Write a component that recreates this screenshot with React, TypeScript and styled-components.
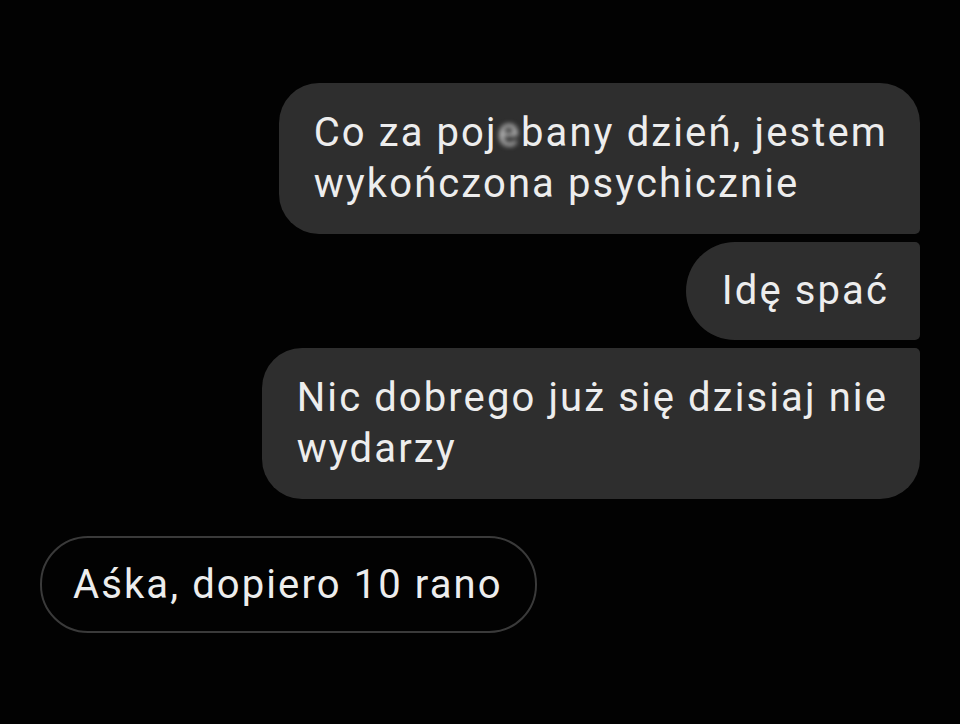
import { ReactElement } from "react";
import styled, { createGlobalStyle, css } from "styled-components";

const GlobalStyle = createGlobalStyle`
  html, body {
    margin: 0;
    padding: 0;
    background: #000;
  }
  body {
    font-family: Roboto, "Noto Sans", sans-serif;
  }
`;

const Thread = styled.div`
  width: 960px;
  height: 724px;
  box-sizing: border-box;
  background: #020202;
  padding: 83px 40px 0 40px;
  display: flex;
  flex-direction: column;
`;

const SentGroup = styled.div`
  display: flex;
  flex-direction: column;
  align-items: flex-end;
  gap: 8px;
`;

type Pos = "first" | "middle" | "last";

const radii: Record<Pos, string> = {
  first: "40px 40px 5px 40px",
  middle: "49px 5px 5px 49px",
  last: "40px 5px 40px 40px",
};

const Bubble = styled.div<{ $pos: Pos }>`
  box-sizing: border-box;
  background: #2e2e2e;
  color: #ededed;
  font-size: 40px;
  letter-spacing: 2.1px;
  line-height: 51px;
  padding: 24px 32px 25px 35px;
  border-radius: ${(p) => radii[p.$pos]};
  white-space: nowrap;
  ${(p) =>
    p.$pos === "middle" &&
    css`
      padding: 23px 31px 24px 36px;
    `}
`;

const Received = styled.div`
  align-self: flex-start;
  margin-top: 37px;
  box-sizing: border-box;
  height: 97px;
  display: flex;
  align-items: center;
  padding: 0 32px 0 31px;
  border: 2px solid #3a3a3a;
  border-radius: 48px;
  color: #ededed;
  font-size: 40px;
  letter-spacing: 2.1px;
  white-space: nowrap;
`;

const Censored = styled.span`
  color: #d0d0d0;
  filter: blur(2.5px);
`;

export default function App(): ReactElement {
  return (
    <>
      <GlobalStyle />
      <Thread>
        <SentGroup>
          <Bubble $pos="first">
            Co za poj<Censored>e</Censored>bany dzień, jestem
            <br />
            wykończona psychicznie
          </Bubble>
          <Bubble $pos="middle">Idę spać</Bubble>
          <Bubble $pos="last">
            Nic dobrego już się dzisiaj nie
            <br />
            wydarzy
          </Bubble>
        </SentGroup>
        <Received>Aśka, dopiero 10 rano</Received>
      </Thread>
    </>
  );
}
